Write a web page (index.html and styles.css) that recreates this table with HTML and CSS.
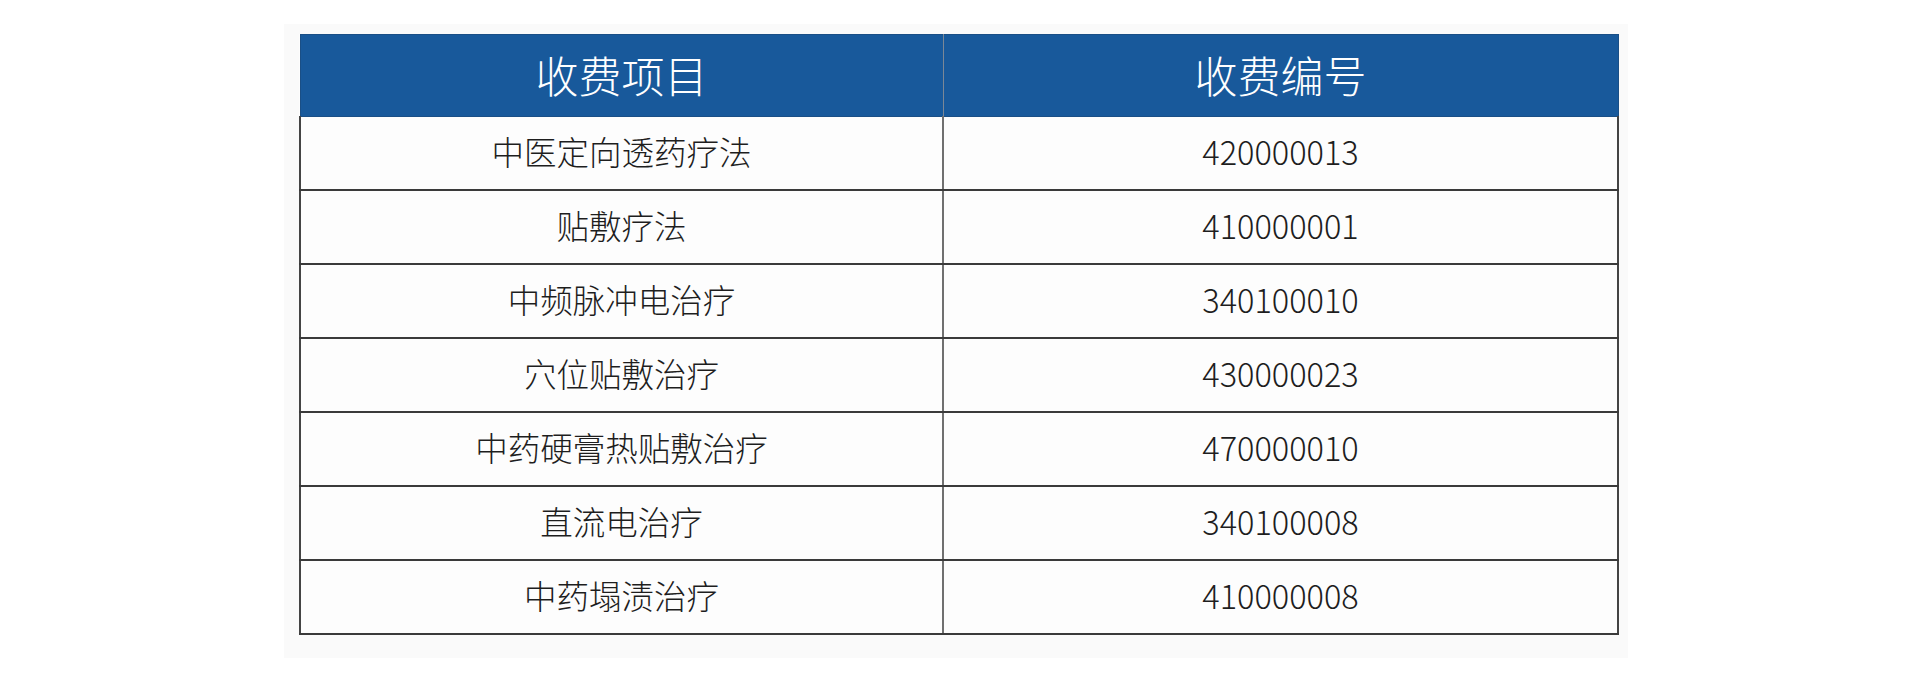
FILE: index.html
```html
<!DOCTYPE html>
<html lang="zh-CN">
<head>
<meta charset="utf-8">
<title>收费项目</title>
<link rel="stylesheet" href="styles.css">
</head>
<body>
<div class="page">
  <div class="panel">
    <table class="fee-table">
      <colgroup>
        <col class="col-name">
        <col class="col-code">
      </colgroup>
      <thead>
        <tr><th>收费项目</th><th>收费编号</th></tr>
      </thead>
      <tbody>
        <tr><td>中医定向透药疗法</td><td>420000013</td></tr>
        <tr><td>贴敷疗法</td><td>410000001</td></tr>
        <tr><td>中频脉冲电治疗</td><td>340100010</td></tr>
        <tr><td>穴位贴敷治疗</td><td>430000023</td></tr>
        <tr><td>中药硬膏热贴敷治疗</td><td>470000010</td></tr>
        <tr><td>直流电治疗</td><td>340100008</td></tr>
        <tr><td>中药塌渍治疗</td><td>410000008</td></tr>
      </tbody>
    </table>
  </div>
</div>
</body>
</html>
```

FILE: styles.css
```css
html, body {
  margin: 0;
  padding: 0;
  background: #ffffff;
}

.page {
  width: 1920px;
  height: 691px;
  padding: 24px 0 0 284px;
  box-sizing: border-box;
}

.panel {
  width: 1344px;
  height: 634px;
  box-sizing: border-box;
  padding: 10px 11px 26px 15px;
  background: #fafafa;
}

.fee-table {
  width: 1318px;
  border-collapse: collapse;
  table-layout: fixed;
  font-family: "Noto Sans CJK SC", "Noto Sans", sans-serif;
  background: #fdfdfd;
}

.col-name { width: 643px; }
.col-code { width: 675px; }

.fee-table th {
  height: 78px;
  padding: 0 0 3px;
  background: #18599b;
  color: #ffffff;
  font-size: 43px;
  font-weight: 300;
  line-height: 1;
  text-align: center;
  vertical-align: middle;
  border: 1px solid #1a4f86;
  border-right: 1px solid #7a8796;
}

.fee-table th:last-child {
  border-right: 1px solid #1a4f86;
}

.fee-table td {
  height: 69px;
  padding: 0 0 3px;
  font-size: 32.5px;
  font-weight: 300;
  line-height: 1;
  color: #1e1e1e;
  text-align: center;
  vertical-align: middle;
  border-top: 2px solid #3a3a3a;
  border-bottom: 2px solid #3a3a3a;
  border-left: 2px solid #444444;
  border-right: 2px solid #707070;
}

.fee-table td:last-child {
  border-right: 2px solid #444444;
}

.fee-table tbody tr:first-child td {
  border-top: 1px solid #555555;
}
```
